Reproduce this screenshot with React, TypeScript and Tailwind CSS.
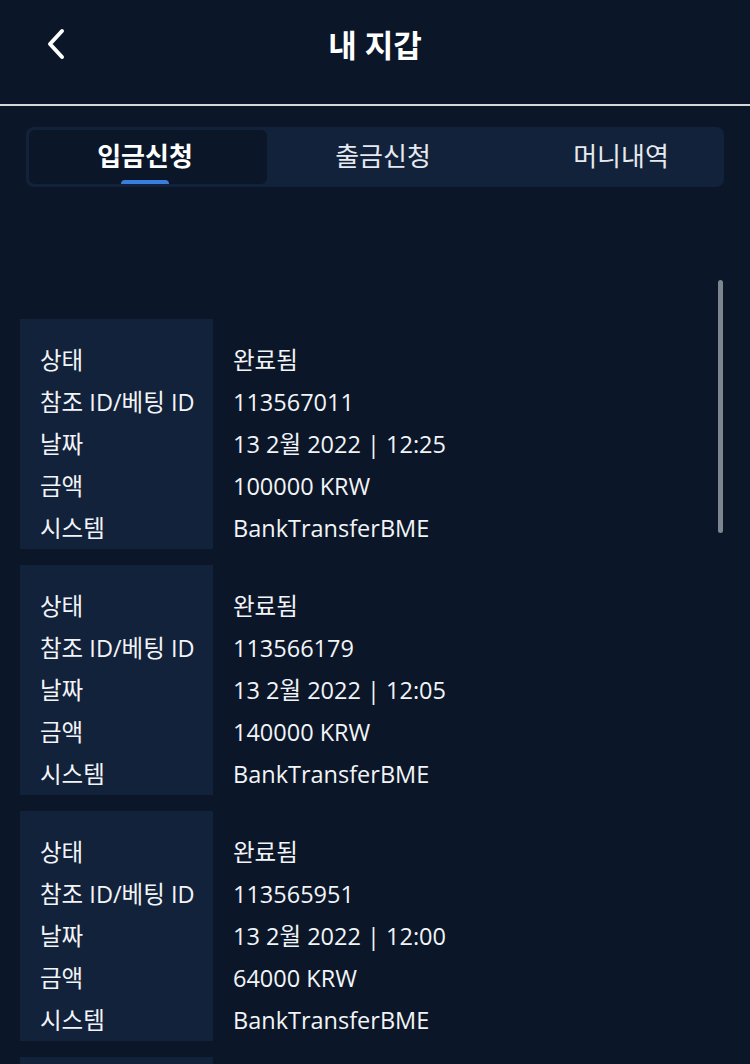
import React from 'react';

const deposits = [
    { status: '완료됨', ref: '113567011', date: '13 2월 2022 | 12:25', amount: '100000 KRW', system: 'BankTransferBME' },
    { status: '완료됨', ref: '113566179', date: '13 2월 2022 | 12:05', amount: '140000 KRW', system: 'BankTransferBME' },
    { status: '완료됨', ref: '113565951', date: '13 2월 2022 | 12:00', amount: '64000 KRW', system: 'BankTransferBME' },
    { status: '완료됨', ref: '113565204', date: '13 2월 2022 | 11:42', amount: '50000 KRW', system: 'BankTransferBME' },
];

const tabs = ['입금신청', '출금신청', '머니내역'];

const font = { fontFamily: '"Open Sans", "Noto Sans CJK KR", sans-serif' };

const App = () => {
    return (
        <div className="h-screen bg-[#0b1729] text-white overflow-hidden" style={font}>
            {/* Header */}
            <div className="relative h-[104px] flex items-center justify-center">
                <button className="absolute left-[40px] top-[26px] w-[32px] h-[36px] flex items-center justify-center">
                    <svg width="26" height="34" viewBox="0 0 26 34" fill="none">
                        <polyline points="19,4 7,17 19,30" stroke="white" strokeWidth="4" strokeLinecap="round" strokeLinejoin="round" />
                    </svg>
                </button>
                <h1 className="text-[31px] font-bold leading-none -mt-[14px]">내 지갑</h1>
            </div>
            <div className="h-[2px] bg-[#d6d6d6]"></div>

            {/* Tabs */}
            <div className="px-[26px] pt-[21px]">
                <div className="h-[60px] rounded-lg bg-[#13223b] p-[3px] overflow-hidden">
                    <div className="grid grid-cols-[238px_238px_238px] h-full">
                        {tabs.map((tab, i) => (
                            <div
                                key={tab}
                                className={`relative flex items-center justify-center rounded-md text-[26px] ${i === 0 ? 'bg-[#0b1729] font-bold' : 'text-[#e6e9ee]'}`}
                            >
                                <span className="-mt-[2px] -ml-[6px]">{tab}</span>
                                {i === 0 && (
                                    <div className="absolute bottom-0 left-1/2 -translate-x-1/2 -ml-[3px] w-[48px] h-[4px] rounded-t bg-[#3b7ddd]"></div>
                                )}
                            </div>
                        ))}
                    </div>
                </div>
            </div>

            {/* Deposit list */}
            <div className="relative pt-[132px] px-[20px] flex flex-col gap-[16px]">
                <div className="absolute right-[27px] top-[93px] w-[5px] h-[253px] rounded-full bg-[#7d858f]"></div>
                {deposits.map((d, i) => (
                    <div key={i} className="grid grid-cols-[193px_1fr] text-[23.5px] leading-[42px] text-[#f2f4f7]">
                        <div className="bg-[#12223b] pt-[20px] pl-[20px] whitespace-nowrap">
                            <div>상태</div>
                            <div>참조 ID/베팅 ID</div>
                            <div>날짜</div>
                            <div>금액</div>
                            <div>시스템</div>
                        </div>
                        <div className="pt-[20px] pl-[20px]">
                            <div>{d.status}</div>
                            <div>{d.ref}</div>
                            <div>{d.date}</div>
                            <div>{d.amount}</div>
                            <div>{d.system}</div>
                        </div>
                    </div>
                ))}
            </div>
        </div>
    );
};

export default App;
